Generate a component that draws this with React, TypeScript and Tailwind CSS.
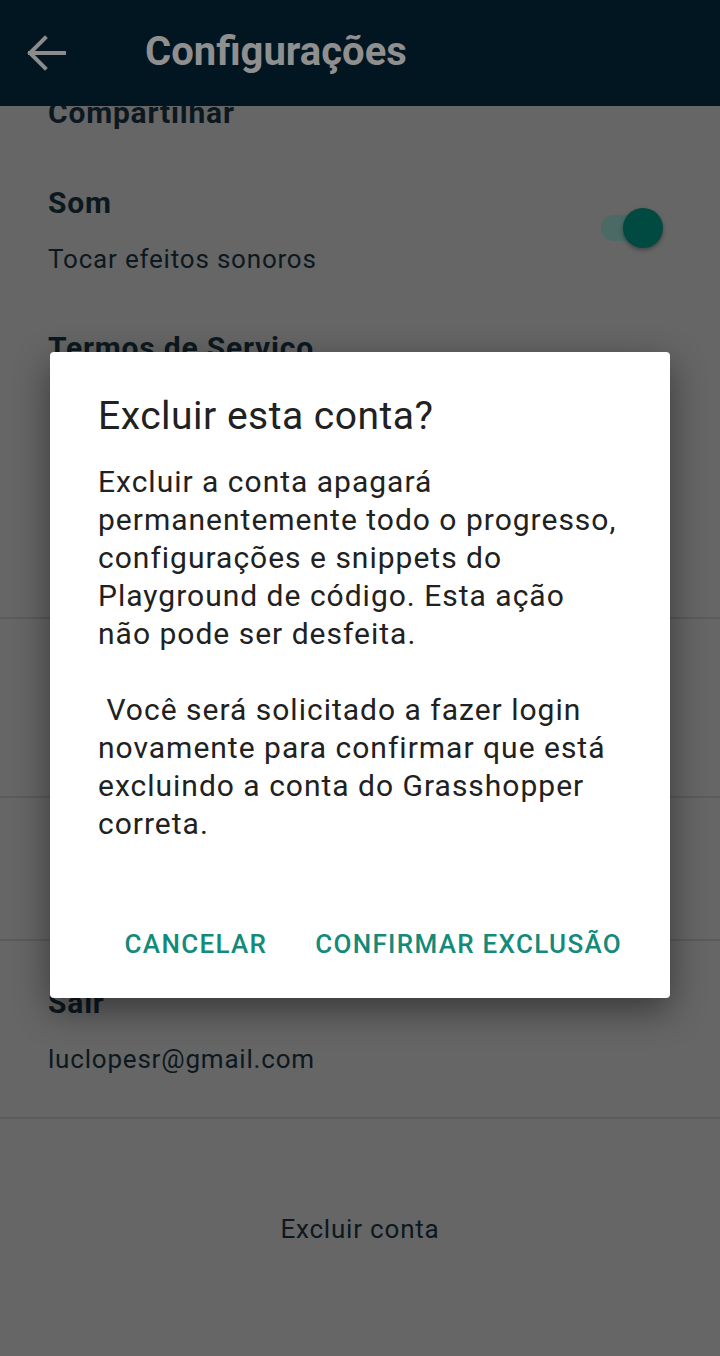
import React from "react";

const font = { fontFamily: "Roboto, 'Noto Sans', sans-serif" };

function BackArrow() {
  return (
    <svg width="44" height="44" viewBox="0 0 44 44" fill="none" stroke="#8c8c8c" strokeWidth={4} strokeLinecap="square">
      <path d="M6 22h34" />
      <path d="M21 7L6 22l15 15" />
    </svg>
  );
}

function Toggle() {
  return (
    <div className="relative w-[66px] h-[44px] flex items-center">
      <div className="ml-[2px] w-[50px] h-[26px] rounded-full bg-[#4b6a66]" />
      <div className="absolute right-[2px] top-[2px] w-[40px] h-[40px] rounded-full bg-[#004a41] shadow-[0_2px_4px_rgba(0,0,0,0.35)]" />
    </div>
  );
}

function Divider() {
  return <div className="h-[2px] bg-[#5b5b5b]" />;
}

export default function App() {
  return (
    <div className="relative w-[720px] h-[1356px] overflow-hidden bg-[#666666] text-[#0c1820]" style={font}>
      <header className="relative z-10 h-[106px] bg-[#011620] flex items-center pl-[24px]">
        <BackArrow />
        <h1 className="ml-[77px] -mt-[2px] text-[40px] leading-[48px] font-bold text-[#8f8f8f]">Configurações</h1>
      </header>

      <div className="px-[48px]">
        <p className="-mt-[10px] text-[30px] leading-[34px] font-bold tracking-[0.8px]">Compartilhar</p>

        <div className="mt-[56px] flex items-start justify-between">
          <div>
            <p className="text-[30px] leading-[34px] font-bold tracking-[0.8px]">Som</p>
            <p className="mt-[23px] text-[26px] leading-[32px] tracking-[0.8px]">Tocar efeitos sonoros</p>
          </div>
          <div className="mt-[20px] mr-[7px]">
            <Toggle />
          </div>
        </div>

        <p className="mt-[56px] text-[30px] leading-[34px] font-bold tracking-[0.8px]">Termos de Serviço</p>
      </div>

      <div className="mt-[252px]">
        <Divider />
        <div className="h-[177px]" />
        <Divider />
        <div className="h-[141px]" />
        <Divider />
      </div>

      <div className="px-[48px] pt-[45px]">
        <p className="text-[30px] leading-[34px] font-bold tracking-[0.8px]">Sair</p>
        <p className="mt-[23px] text-[26px] leading-[32px] tracking-[0.8px]">luclopesr@gmail.com</p>
      </div>
      <div className="mt-[42px]">
        <Divider />
      </div>
      <div className="pt-[94px] text-center">
        <p className="text-[26px] leading-[32px] tracking-[0.8px]">Excluir conta</p>
      </div>

      <div className="absolute left-[50px] top-[352px] w-[620px] h-[646px] bg-white rounded-[4px] shadow-[0_12px_36px_rgba(0,0,0,0.45)] flex flex-col">
        <div className="px-[48px] pt-[42px] text-[#212121]">
          <h2 className="text-[39px] leading-[44px] tracking-[0.5px]">Excluir esta conta?</h2>
          <p className="mt-[25px] text-[30px] leading-[38px] tracking-[1px] whitespace-pre">
            {"Excluir a conta apagará\npermanentemente todo o progresso,\nconfigurações e snippets do\nPlayground de código. Esta ação\nnão pode ser desfeita.\n\n Você será solicitado a fazer login\nnovamente para confirmar que está\nexcluindo a conta do Grasshopper\ncorreta."}
          </p>
        </div>
        <div className="mt-auto mb-[38px] flex justify-end gap-[48px] pr-[48px] text-[26px] leading-[32px] font-medium tracking-[1.3px] text-[#138a7a]">
          <button>CANCELAR</button>
          <button>CONFIRMAR EXCLUSÃO</button>
        </div>
      </div>
    </div>
  );
}
